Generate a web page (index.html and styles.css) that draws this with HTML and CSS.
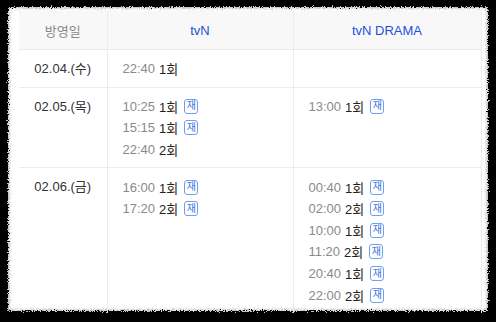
FILE: index.html
```html
<!DOCTYPE html>
<html lang="ko">
<head>
<meta charset="utf-8">
<link rel="stylesheet" href="styles.css">
</head>
<body>
<svg class="defs" width="0" height="0" aria-hidden="true">
  <filter id="rough" x="-5%" y="-5%" width="110%" height="110%">
    <feTurbulence type="fractalNoise" baseFrequency="0.9" numOctaves="2" seed="3" result="n"/>
    <feDisplacementMap in="SourceGraphic" in2="n" scale="6" xChannelSelector="R" yChannelSelector="G"/>
  </filter>
</svg>
<div class="card">
  <table class="sched">
    <colgroup><col class="c1"><col class="c2"><col class="c3"></colgroup>
    <thead>
      <tr><th class="hdate">방영일</th><th>tvN</th><th>tvN DRAMA</th></tr>
    </thead>
    <tbody>
      <tr>
        <td class="date">02.04.(수)</td>
        <td><div class="it"><span class="t">22:40</span><span class="e">1회</span></div></td>
        <td></td>
      </tr>
      <tr>
        <td class="date">02.05.(목)</td>
        <td>
          <div class="it"><span class="t">10:25</span><span class="e">1회</span><span class="re">재</span></div>
          <div class="it"><span class="t">15:15</span><span class="e">1회</span><span class="re">재</span></div>
          <div class="it"><span class="t">22:40</span><span class="e">2회</span></div>
        </td>
        <td>
          <div class="it"><span class="t">13:00</span><span class="e">1회</span><span class="re">재</span></div>
        </td>
      </tr>
      <tr class="last">
        <td class="date">02.06.(금)</td>
        <td>
          <div class="it"><span class="t">16:00</span><span class="e">1회</span><span class="re">재</span></div>
          <div class="it"><span class="t">17:20</span><span class="e">2회</span><span class="re">재</span></div>
        </td>
        <td>
          <div class="it"><span class="t">00:40</span><span class="e">1회</span><span class="re">재</span></div>
          <div class="it"><span class="t">02:00</span><span class="e">2회</span><span class="re">재</span></div>
          <div class="it"><span class="t">10:00</span><span class="e">1회</span><span class="re">재</span></div>
          <div class="it"><span class="t">11:20</span><span class="e">2회</span><span class="re">재</span></div>
          <div class="it"><span class="t">20:40</span><span class="e">1회</span><span class="re">재</span></div>
          <div class="it"><span class="t">22:00</span><span class="e">2회</span><span class="re">재</span></div>
        </td>
      </tr>
    </tbody>
  </table>
</div>
</body>
</html>
```
FILE: styles.css
```css
html, body {
  margin: 0;
  padding: 0;
  background: #000;
  width: 496px;
  height: 322px;
  overflow: hidden;
}
.defs { position: absolute; width: 0; height: 0; }
.card {
  position: relative;
  margin: 7px 0 0 8px;
  width: 480px;
  height: 304px;
  padding: 4px 0 0 11px;
  box-sizing: border-box;
  font-family: "Liberation Sans", "Noto Sans CJK KR", sans-serif;
  font-size: 13px;
  color: #333;
  isolation: isolate;
}
.card::before {
  content: "";
  position: absolute;
  inset: 0;
  background: #fff;
  box-shadow: inset 0 0 3px 1px #aaa;
  filter: url(#rough);
  z-index: -1;
}
.sched {
  border-collapse: collapse;
  table-layout: fixed;
  width: 462px;
}
.c1 { width: 88px; }
.c2 { width: 186px; }
.c3 { width: 188px; }
.sched th {
  height: 38px;
  padding: 0;
  background: #f8f8f8;
  font-weight: normal;
  color: #2450d8;
  border-right: 1px solid #ececec;
  border-bottom: 1px solid #ececec;
  text-align: center;
}
.sched th.hdate { color: #888; }
.sched td {
  padding: 8px 0 7px 15px;
  vertical-align: top;
  border-right: 1px solid #ececec;
  border-bottom: 1px solid #ececec;
}
.sched td.date {
  padding-left: 0;
  text-align: center;
  line-height: 21.6px;
  color: #333;
}
.sched tr.last td { border-bottom: none; }
.it {
  display: flex;
  align-items: center;
  height: 21.6px;
  white-space: nowrap;
}
.t { color: #8a8a8a; margin-right: 4px; }
.e { color: #222; }
.re {
  display: inline-flex;
  align-items: center;
  justify-content: center;
  width: 12px;
  height: 13px;
  margin-left: 6px;
  border: 1px solid #6f9ef2;
  border-radius: 3px;
  color: #3e73e0;
  font-size: 10px;
  line-height: 1;
}
```
